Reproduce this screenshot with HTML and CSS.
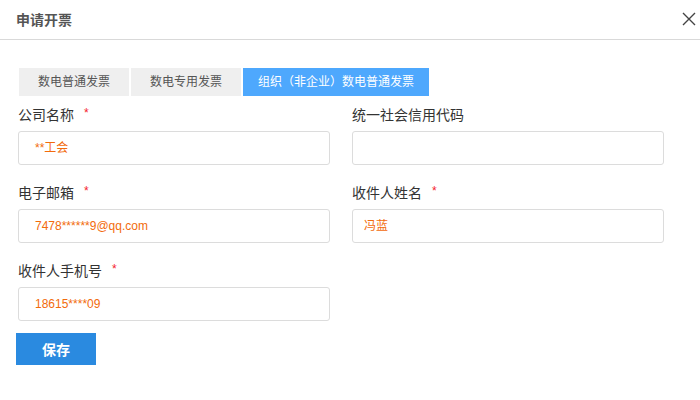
FILE: index.html
```html
<!DOCTYPE html>
<html lang="zh-CN">
<head>
<meta charset="utf-8">
<title>申请开票</title>
<link rel="stylesheet" href="styles.css">
</head>
<body>
<div class="dialog">
  <div class="header">
    <div class="title">申请开票</div>
    <svg class="close" width="14" height="14" viewBox="0 0 14 14"><path d="M1 1L13 13M13 1L1 13" stroke="#444" stroke-width="1.4" fill="none"/></svg>
  </div>
  <div class="body">
    <div class="tabs">
      <div class="tab">数电普通发票</div>
      <div class="tab">数电专用发票</div>
      <div class="tab active">组织（非企业）数电普通发票</div>
    </div>
    <div class="form">
      <div class="field">
        <div class="label">公司名称<span class="req">*</span></div>
        <div class="input">**工会</div>
      </div>
      <div class="field">
        <div class="label">统一社会信用代码</div>
        <div class="input input-right"></div>
      </div>
      <div class="field">
        <div class="label">电子邮箱<span class="req">*</span></div>
        <div class="input">7478******9@qq.com</div>
      </div>
      <div class="field">
        <div class="label">收件人姓名<span class="req">*</span></div>
        <div class="input input-right">冯蓝</div>
      </div>
      <div class="field">
        <div class="label">收件人手机号<span class="req">*</span></div>
        <div class="input">18615****09</div>
      </div>
    </div>
    <button class="save">保存</button>
  </div>
</div>
</body>
</html>
```
FILE: styles.css
```css
html, body {
  margin: 0;
  padding: 0;
  background: #fff;
  font-family: "Liberation Sans", "Noto Sans CJK SC", sans-serif;
}
.dialog {
  width: 700px;
  height: 400px;
}
.header {
  border-bottom: 1px solid #d9d9d9;
  display: flex;
  align-items: center;
  justify-content: space-between;
  padding: 0 4px 0 16px;
  box-sizing: border-box;
  height: 40px;
}
.title {
  font-size: 14px;
  font-weight: bold;
  color: #555;
  margin-top: -2px;
}
.close {
  margin-top: -2px;
}
.body {
  padding: 28px 0 0 19px;
}
.tabs {
  display: flex;
  gap: 2px;
}
.tab {
  height: 28px;
  line-height: 28px;
  min-width: 110px;
  padding: 0 15px;
  box-sizing: border-box;
  text-align: center;
  background: #efefef;
  color: #555;
  font-size: 12px;
}
.tab.active {
  background: #4ea8fd;
  color: #fff;
}
.form {
  display: grid;
  grid-template-columns: 312px 312px;
  column-gap: 22px;
  margin-left: -1px;
  margin-top: 9px;
}
.field {
  margin-bottom: 18px;
}
.label {
  height: 20px;
  line-height: 20px;
  font-size: 14px;
  color: #333;
  margin-bottom: 6px;
}
.req {
  color: #f5222d;
  font-size: 12px;
  margin-left: 10px;
  vertical-align: top;
  position: relative;
  top: -2px;
}
.input {
  height: 34px;
  box-sizing: border-box;
  border: 1px solid #dcdcdc;
  border-radius: 3px;
  padding: 0 16px;
  line-height: 32px;
  font-size: 12px;
  color: #f26b0c;
}
.input-right {
  padding: 0 11px;
}
.save {
  display: block;
  margin: -6px 0 0 -3px;
  width: 80px;
  height: 32px;
  border: none;
  background: #2a8ae0;
  color: #fff;
  font-size: 14px;
  font-weight: bold;
  font-family: "Liberation Sans", "Noto Sans CJK SC", sans-serif;
  padding: 0;
}
```
